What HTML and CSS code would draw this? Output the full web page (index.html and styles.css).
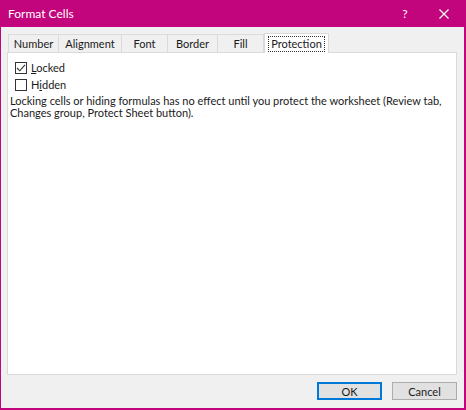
FILE: index.html
```html
<!DOCTYPE html>
<html>
<head>
<meta charset="utf-8">
<link rel="stylesheet" href="styles.css">
</head>
<body>
<div class="window">
  <div class="titlebar">
    <span class="title">Format Cells</span>
    <span class="help">?</span>
    <span class="close">
      <svg width="10" height="10" viewBox="0 0 10 10"><path d="M0.5 0.5 L9.5 9.5 M9.5 0.5 L0.5 9.5" stroke="#fff" stroke-width="1.2" fill="none"/></svg>
    </span>
  </div>
  <div class="body">
    <div class="tabs">
      <div class="tab t-number">Number</div>
      <div class="tab t-align">Alignment</div>
      <div class="tab t-font">Font</div>
      <div class="tab t-border">Border</div>
      <div class="tab t-fill">Fill</div>
      <div class="tab active"><span class="focus">Protection</span></div>
    </div>
    <div class="panel">
      <label class="check">
        <span class="box">
          <svg width="12" height="12" viewBox="0 0 12 12"><path d="M2 6 L4.8 8.8 L10 2.8" stroke="#333" stroke-width="1.1" fill="none"/></svg>
        </span>
        <span><u>L</u>ocked</span>
      </label>
      <label class="check">
        <span class="box"></span>
        <span>H<u>i</u>dden</span>
      </label>
      <p class="note">Locking cells or hiding formulas has no effect until you protect the worksheet (Review tab, Changes group, Protect Sheet button).</p>
    </div>
    <div class="buttons">
      <div class="btn default">OK</div>
      <div class="btn">Cancel</div>
    </div>
  </div>
</div>
</body>
</html>
```
FILE: styles.css
```css
html, body {
  margin: 0;
  padding: 0;
  background: #f0f0f0;
}
body {
  font-family: Lato, "Noto Sans", sans-serif;
  font-size: 11px;
  color: #1a1a1a;
}
.window {
  width: 466px;
  height: 410px;
  box-sizing: border-box;
  border-left: 1px solid #c2057c;
  border-right: 2px solid #c2057c;
  border-bottom: 2px solid #c2057c;
  display: flex;
  flex-direction: column;
  background: #f0f0f0;
}
.titlebar {
  height: 27px;
  background: #c2057c;
  color: #fff;
  display: flex;
  align-items: center;
  flex: none;
  margin-left: -1px;
  margin-right: -2px;
}
.title {
  margin-left: 8px;
  font-size: 12px;
  flex: 1;
}
.help {
  width: 12px;
  margin-right: 28px;
  font-size: 12px;
  text-align: center;
}
.close {
  display: flex;
  margin-right: 17px;
}
.body {
  flex: 1;
  display: flex;
  flex-direction: column;
  padding: 0 7px 0 6px;
}
.tabs {
  display: flex;
  height: 25px;
  align-items: flex-end;
  padding-left: 1px;
}
.tab {
  height: 18px;
  box-sizing: border-box;
  border: 1px solid #dadada;
  border-bottom: none;
  border-right: none;
  background: #f0f0f0;
  display: flex;
  align-items: center;
  justify-content: center;
}
.t-number { width: 50px; }
.t-align { width: 63px; }
.t-font { width: 46px; }
.t-border { width: 50px; }
.t-fill { width: 47px; border-right: 1px solid #dadada; }
.tab.active {
  width: 65px;
  height: 20px;
  background: #fff;
  border: 1px solid #dadada;
  border-bottom: none;
  margin-bottom: -1px;
  position: relative;
  z-index: 1;
}
.focus {
  border: 1px dotted #333;
  padding: 0 2px;
  line-height: 14px;
}
.panel {
  height: 323px;
  background: #fff;
  border: 1px solid #dadada;
  box-sizing: border-box;
  padding: 6px 0 0 2px;
}
.check {
  display: flex;
  align-items: center;
  gap: 4px;
  height: 17px;
  margin-left: 5px;
}
.box {
  width: 12px;
  height: 12px;
  box-sizing: border-box;
  border: 1px solid #333;
  display: flex;
  background: #fff;
}
.box svg { margin: -1px; }
.note {
  margin: 2px 0 0 0;
  line-height: 12px;
}
.buttons {
  display: flex;
  justify-content: flex-end;
  gap: 10px;
  margin-top: 7px;
}
.btn {
  width: 65px;
  height: 18px;
  box-sizing: border-box;
  border: 1px solid #adadad;
  background: #e1e1e1;
  display: flex;
  align-items: center;
  justify-content: center;
}
.btn.default {
  border: 2px solid #0078d7;
}
```
